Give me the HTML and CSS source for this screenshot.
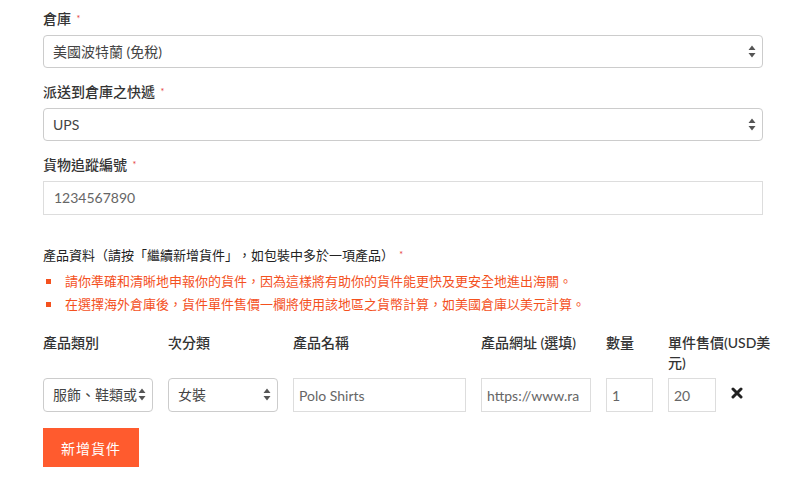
FILE: index.html
```html
<!DOCTYPE html>
<html lang="zh-Hant">
<head>
<meta charset="utf-8">
<link rel="stylesheet" href="styles.css">
</head>
<body>
<form class="form">
  <div class="group">
    <label class="label">倉庫 <span class="req">*</span></label>
    <div class="select-wrap">
      <div class="select">美國波特蘭 (免稅)</div>
      <svg class="arrows" viewBox="0 0 8 13" width="8" height="13"><path d="M4 0.5 L7.5 5 L0.5 5 Z M4 12.5 L7.5 8 L0.5 8 Z" fill="#555"/></svg>
    </div>
  </div>
  <div class="group">
    <label class="label">派送到倉庫之快遞 <span class="req">*</span></label>
    <div class="select-wrap">
      <div class="select">UPS</div>
      <svg class="arrows" viewBox="0 0 8 13" width="8" height="13"><path d="M4 0.5 L7.5 5 L0.5 5 Z M4 12.5 L7.5 8 L0.5 8 Z" fill="#555"/></svg>
    </div>
  </div>
  <div class="group">
    <label class="label">貨物追蹤編號 <span class="req">*</span></label>
    <div class="input">1234567890</div>
  </div>

  <div class="products">
    <div class="heading">產品資料（請按「繼續新增貨件」，如包裝中多於一項產品） <span class="req">*</span></div>
    <ul class="notes">
      <li>請你準確和清晰地申報你的貨件，因為這樣將有助你的貨件能更快及更安全地進出海關。</li>
      <li>在選擇海外倉庫後，貨件單件售價一欄將使用該地區之貨幣計算，如美國倉庫以美元計算。</li>
    </ul>
    <div class="thead">
      <div class="th c1">產品類別</div>
      <div class="th c2">次分類</div>
      <div class="th c3">產品名稱</div>
      <div class="th c4">產品網址 (選填)</div>
      <div class="th c5">數量</div>
      <div class="th c6">單件售價(USD美元)</div>
    </div>
    <div class="trow">
      <div class="td c1">
        <div class="select-wrap small">
          <div class="select sm">服飾、鞋類或</div>
          <svg class="arrows" viewBox="0 0 8 13" width="8" height="13"><path d="M4 0.5 L7.5 5 L0.5 5 Z M4 12.5 L7.5 8 L0.5 8 Z" fill="#555"/></svg>
        </div>
      </div>
      <div class="td c2">
        <div class="select-wrap small">
          <div class="select sm">女裝</div>
          <svg class="arrows" viewBox="0 0 8 13" width="8" height="13"><path d="M4 0.5 L7.5 5 L0.5 5 Z M4 12.5 L7.5 8 L0.5 8 Z" fill="#555"/></svg>
        </div>
      </div>
      <div class="td c3"><div class="input sm name">Polo Shirts</div></div>
      <div class="td c4"><div class="input sm url">https://www.ra</div></div>
      <div class="td c5"><div class="input sm qty">1</div></div>
      <div class="td c6x"><div class="input sm price">20</div></div>
      <div class="td remove">
        <svg viewBox="0 0 12 12" width="12" height="12"><path d="M2 2 L10 10 M10 2 L2 10" stroke="#222" stroke-width="3" stroke-linecap="round"/></svg>
      </div>
    </div>
    <button type="button" class="add">新增貨件</button>
  </div>
</form>
</body>
</html>
```

FILE: styles.css
```css
* { box-sizing: border-box; }
html, body { margin: 0; padding: 0; background: #fff; }
body {
  font-family: "Lato", "Noto Sans CJK TC", sans-serif;
  color: #333;
  font-size: 14px;
  text-spacing-trim: space-all;
}
.form {
  width: 763px;
  padding: 9px 0 0 43px;
}
.group { margin-bottom: 14px; }
.label {
  display: block;
  font-size: 14px;
  font-weight: 500;
  line-height: 20px;
  margin-bottom: 6px;
  color: #333;
}
.req { color: #e53935; font-size: 9px; vertical-align: top; margin-left: 2px; font-weight: 400; }
.select-wrap { position: relative; }
.select {
  height: 33px;
  border: 1px solid #ccc;
  border-radius: 4px;
  padding: 0 9px;
  line-height: 31px;
  font-size: 14px;
  color: #444;
  white-space: nowrap;
  overflow: hidden;
}
.arrows { position: absolute; right: 7px; top: 10px; }
.input {
  height: 34px;
  border: 1px solid #ddd;
  padding: 0 10px;
  line-height: 32px;
  font-size: 14px;
  color: #666;
  white-space: nowrap;
  overflow: hidden;
}
.products { margin-top: 30px; }
.heading {
  font-size: 13px;
  line-height: 20px;
  color: #222;
  font-weight: 400;
}
.notes {
  list-style: none;
  margin: 5px 0 0;
  padding: 0;
}
.notes li {
  position: relative;
  padding-left: 22px;
  line-height: 23px;
  font-size: 13px;
  color: #f4511e;
}
.notes li::before {
  content: "";
  position: absolute;
  left: 3px;
  top: 9px;
  width: 5px;
  height: 5px;
  background: #f4511e;
}
.thead {
  display: flex;
  margin-top: 17px;
  align-items: flex-start;
}
.th {
  font-size: 14px;
  font-weight: 500;
  line-height: 20px;
  color: #333;
}
.c1, .c2, .c4 { width: 125px; flex: none; }
.c3 { width: 188px; flex: none; }
.c5 { width: 62px; flex: none; }
.c6 { width: 108px; flex: none; }
.c6x { width: 63px; flex: none; }
.trow {
  display: flex;
  align-items: center;
  margin-top: 5px;
}
.small { width: 110px; }
.select.sm { padding: 0 20px 0 9px; height: 34px; line-height: 32px; }
.input.sm { height: 34px; line-height: 34px; padding: 0 5px; }
.name { width: 173px; }
.url { width: 110px; }
.qty { width: 47px; padding-left: 6px; }
.price { width: 48px; }
.remove { display: flex; align-items: center; margin-top: -4px; }
.add {
  margin-top: 16px;
  width: 96px;
  height: 39px;
  background: #ff5b2e;
  border: none;
  color: #fff;
  font-family: "Lato", "Noto Sans CJK TC", sans-serif;
  font-size: 14px;
  letter-spacing: 1px;
  padding: 0;
}
```
